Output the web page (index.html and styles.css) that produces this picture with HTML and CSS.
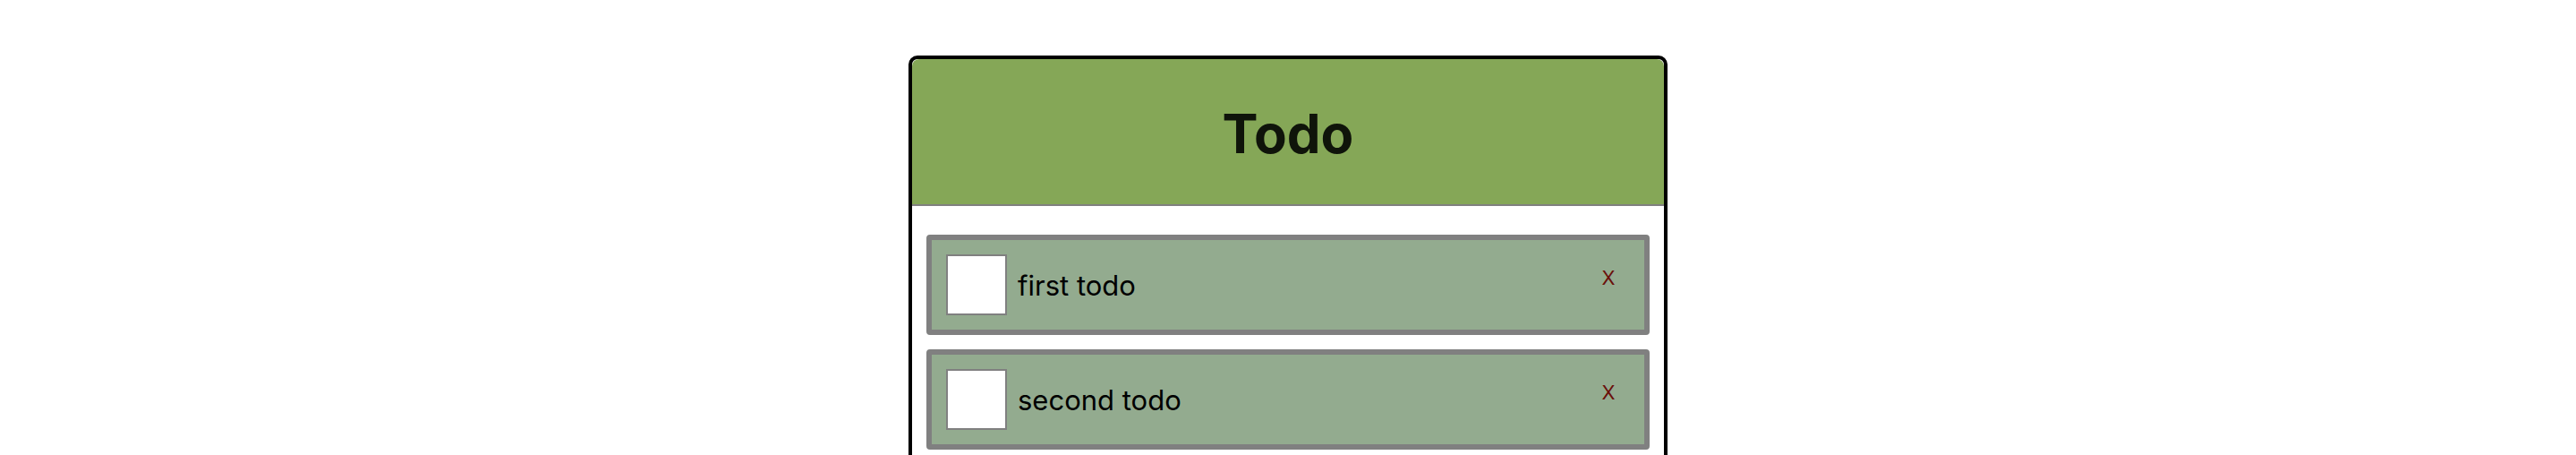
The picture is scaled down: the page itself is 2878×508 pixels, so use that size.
FILE: index.html
```html
<!DOCTYPE html>
<html lang="en">
<head>
<meta charset="utf-8">
<meta name="viewport" content="width=device-width, initial-scale=1">
<title>Todo</title>
<link rel="stylesheet" href="styles.css">
</head>
<body>
<main class="card">
  <header class="card-header">
    <h1 class="title">Todo</h1>
  </header>
  <ul class="list">
    <li class="item">
      <input class="check" type="checkbox" id="todo-1">
      <label class="label" for="todo-1">first todo</label>
      <button class="remove" type="button">X</button>
    </li>
    <li class="item">
      <input class="check" type="checkbox" id="todo-2">
      <label class="label" for="todo-2">second todo</label>
      <button class="remove" type="button">X</button>
    </li>
  </ul>
</main>
</body>
</html>
```
FILE: styles.css
```css
* {
  box-sizing: border-box;
}

body {
  margin: 0;
  padding: 62px 16px 0;
  background: #fff;
  color: #000;
  font-family: Inter, "Liberation Sans", sans-serif;
  font-size: 31px;
}

.card {
  max-width: 848px;
  margin: 0 auto;
  border: 4px solid #000;
  border-radius: 10px;
}

.card-header {
  padding: 42px 16px 38px;
  border-bottom: 2px solid #808080;
  border-radius: 8px 8px 0 0;
  background: #85a757;
  text-align: center;
}

.title {
  margin: 0;
  color: #0f140a;
  font-size: 60px;
  line-height: 82px;
}

.list {
  display: flex;
  flex-direction: column;
  gap: 16px;
  margin: 0;
  padding: 32px 16px;
  list-style: none;
}

.item {
  display: flex;
  align-items: center;
  gap: 12px;
  padding: 16px;
  border: 6px solid #808080;
  border-radius: 4px;
  background: #93ab8f;
}

.check {
  appearance: none;
  flex: none;
  width: 68px;
  height: 68px;
  margin: 0;
  border: 2px solid #808080;
  background: #fff;
}

.check:checked {
  background: #85a757;
}

.label {
  flex: 1;
}

.remove {
  align-self: flex-start;
  width: 48px;
  height: 52px;
  padding: 0;
  border: 0;
  background: none;
  color: #6a0f0a;
  font-family: inherit;
  font-size: 22px;
  cursor: pointer;
}
```
